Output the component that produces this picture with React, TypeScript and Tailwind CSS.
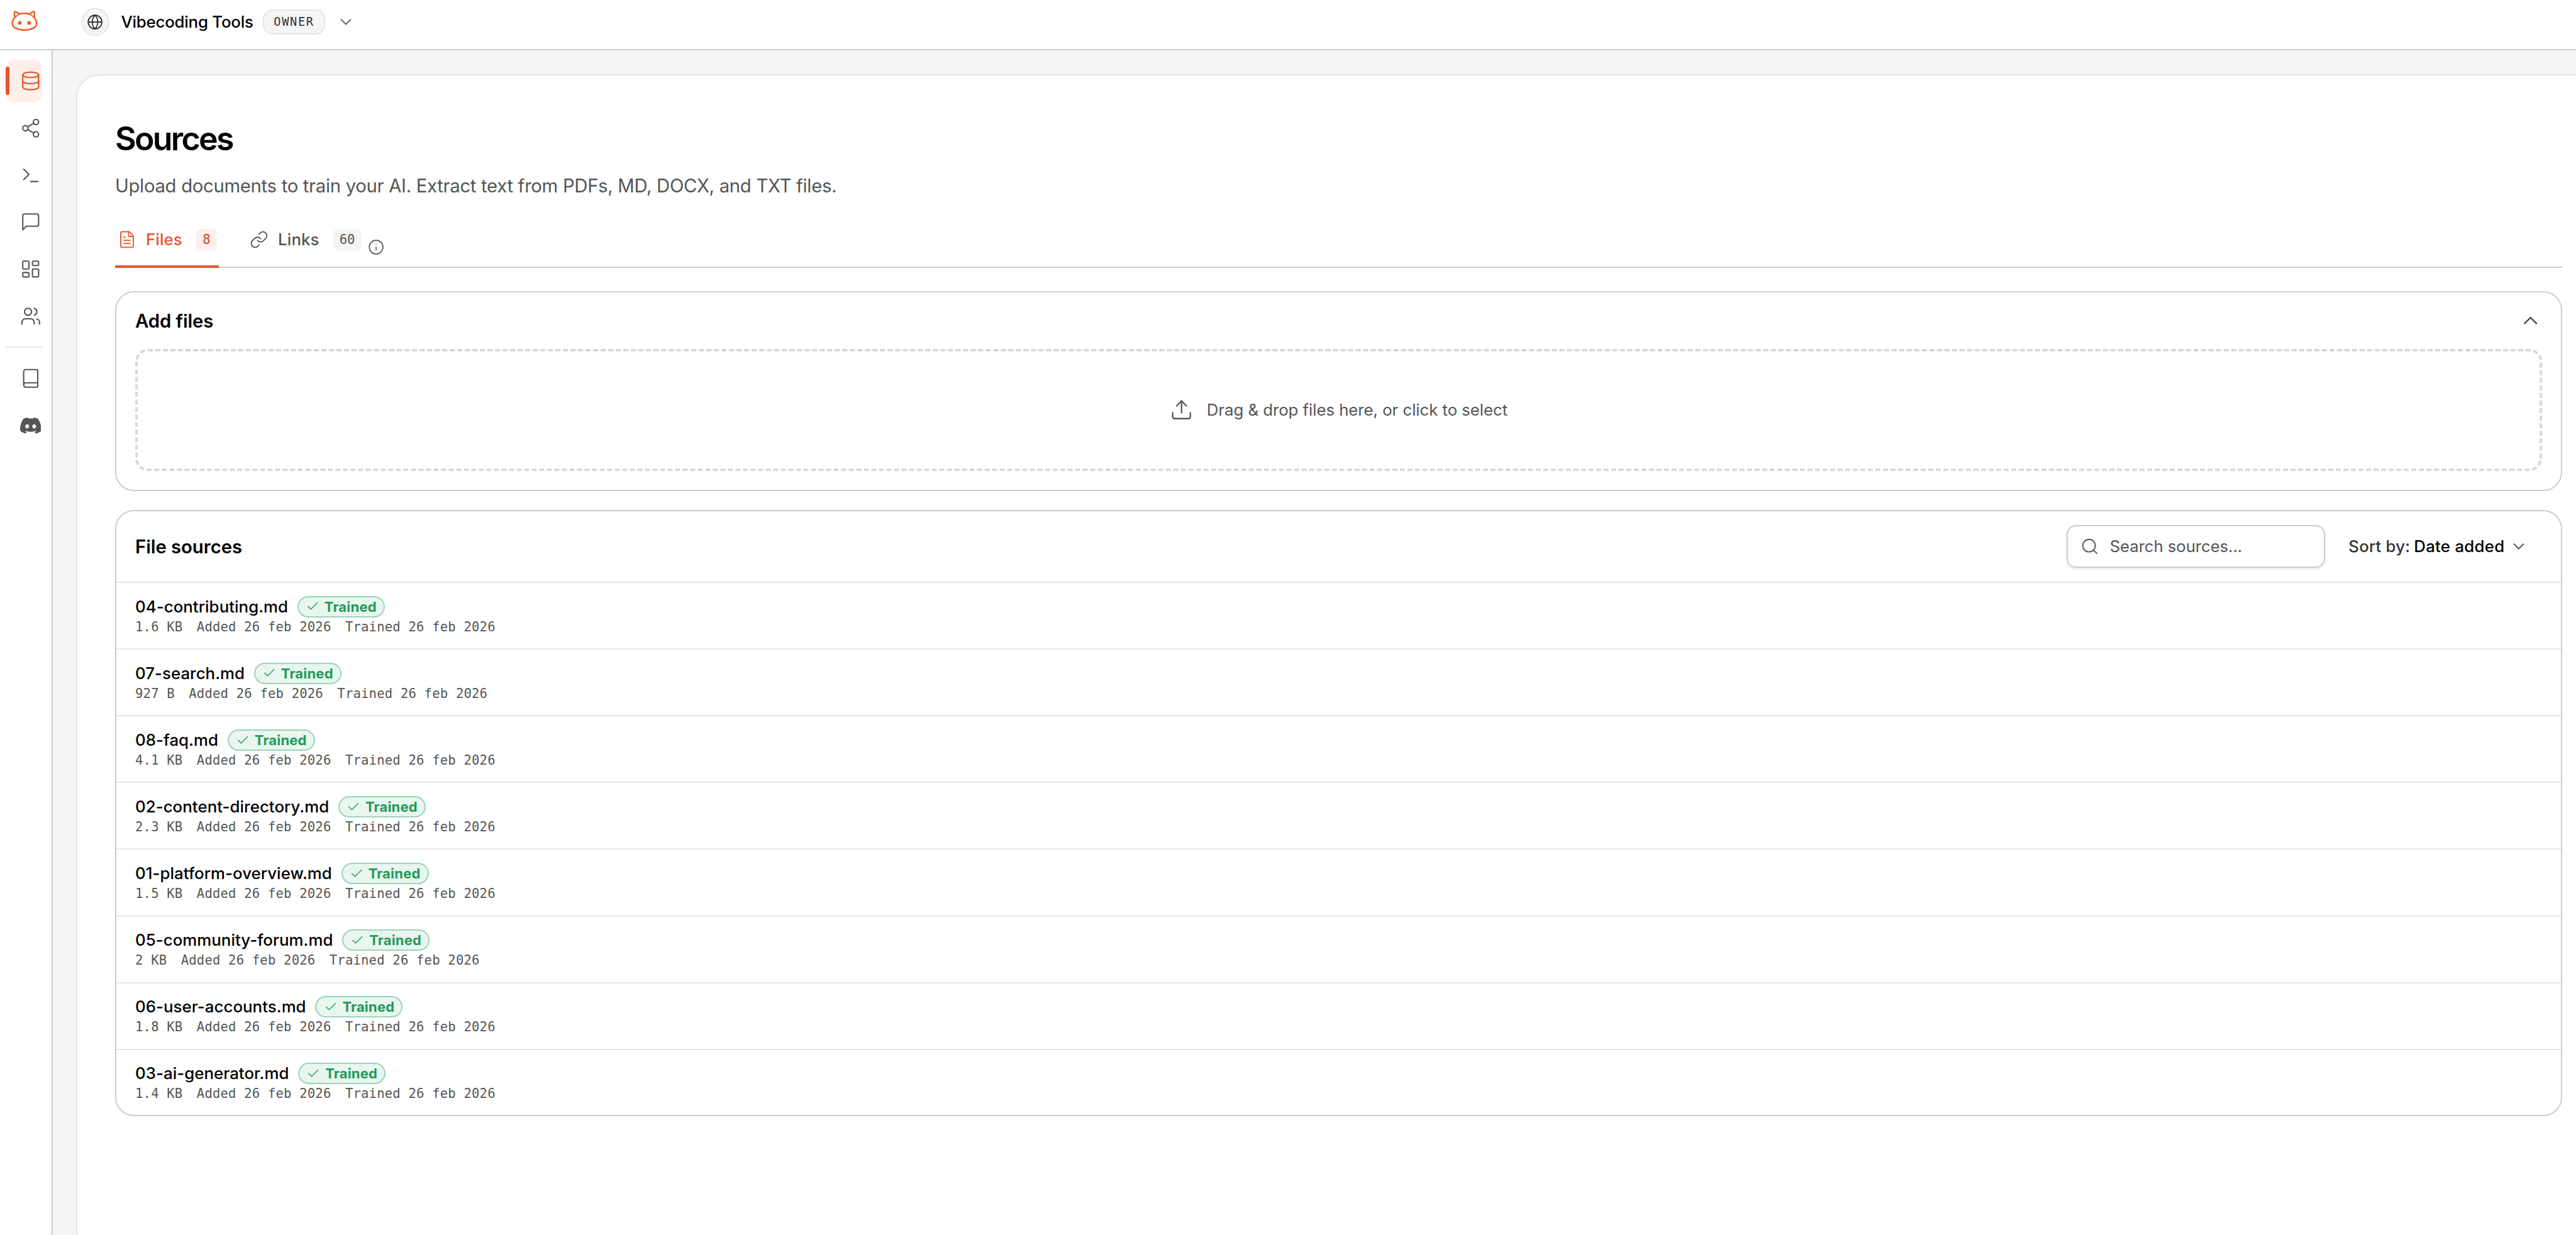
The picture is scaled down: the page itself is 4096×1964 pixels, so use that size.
import type { ReactNode } from "react";
import {
  Book,
  Check,
  ChevronDown,
  ChevronUp,
  Database,
  FileText,
  Globe,
  Info,
  LayoutDashboard,
  Link,
  Search,
  Share2,
  Terminal,
  Upload,
  Users,
} from "lucide-react";
import { SiDiscord } from "react-icons/si";

const files = [
  { name: "04-contributing.md", size: "1.6 KB" },
  { name: "07-search.md", size: "927 B" },
  { name: "08-faq.md", size: "4.1 KB" },
  { name: "02-content-directory.md", size: "2.3 KB" },
  { name: "01-platform-overview.md", size: "1.5 KB" },
  { name: "05-community-forum.md", size: "2 KB" },
  { name: "06-user-accounts.md", size: "1.8 KB" },
  { name: "03-ai-generator.md", size: "1.4 KB" },
];

function Logo() {
  return (
    <svg viewBox="0 0 192 180" className="h-[56px] w-[59.8px]" fill="none" stroke="#ee5a24" strokeWidth="8" strokeLinecap="round" strokeLinejoin="round">
      <path d="M47 66 C44 56 44 46 46 39 C47 36 50 36 53 38 L70 49 C86 45 106 45 122 49 L139 38 C142 36 145 36 146 39 C148 46 148 56 145 66 C152 74 158 87 158 99 C158 119 128 131 96 131 C64 131 34 119 34 99 C34 87 40 74 47 66 Z" />
      <path d="M49 65 C55 58 62 53 70 50 M143 65 C137 58 130 53 122 50" strokeWidth="6" />
      <circle cx="72" cy="95" r="9.5" fill="#ee5a24" stroke="none" />
      <circle cx="120" cy="95" r="9.5" fill="#ee5a24" stroke="none" />
    </svg>
  );
}

function ChatSquare() {
  return (
    <svg viewBox="0 0 24 24" className="size-[33.6px]" fill="none" stroke="currentColor" strokeWidth="1.5" strokeLinecap="round" strokeLinejoin="round">
      <path d="M21 15a2 2 0 0 1-2 2H7l-4 4V5a2 2 0 0 1 2-2h14a2 2 0 0 1 2 2z" />
    </svg>
  );
}

function NavItem({ children, active }: { children: ReactNode; active?: boolean }) {
  return (
    <div
      className={
        active
          ? "relative flex h-[67.3px] w-[58px] items-center justify-end rounded-[15px] bg-[#ffeeea] pr-[2px] text-[#e0522a]"
          : "relative flex h-[67.3px] w-[58px] items-center justify-end pr-[2px] text-[#555555]"
      }
    >
      {active && <span className="absolute left-0 top-[11.2px] h-[44.8px] w-[5.6px] rounded-full bg-[#e5552a]" />}
      {children}
    </div>
  );
}

function Row({ name, size, last }: { name: string; size: string; last: boolean }) {
  return (
    <div
      className={
        last
          ? "h-[103.7px] pl-[30px] pt-[20.8px]"
          : "h-[106.12px] border-b-2 border-[#e5e5e5] pl-[30px] pt-[20.8px]"
      }
    >
      <div className="flex h-[33.6px] items-center gap-[14.7px]">
        <span className="pt-[1px] text-[25.8px] font-[540] tracking-[0.06px] text-black">{name}</span>
        <span className="flex h-[34px] items-center gap-[7.5px] rounded-full border-2 border-[#9dd4b6] bg-[#e8f6ef] px-[11.2px] text-[#229a58]">
          <Check className="size-[22.4px]" strokeWidth={1.5} />
          <span className="text-[22px] font-bold leading-none tracking-[0.2px]">Trained</span>
        </span>
      </div>
      <div className="flex h-[31.2px] items-center gap-[22.4px] font-['DejaVu_Sans_Mono',monospace] text-[20.55px] tracking-[0.2px] text-[#555555]">
        <span>{size}</span>
        <span>Added 26 feb 2026</span>
        <span>Trained 26 feb 2026</span>
      </div>
    </div>
  );
}

export default function App() {
  return (
    <div className="flex h-[1964px] w-[4096px] flex-col overflow-hidden bg-white font-[Inter,sans-serif] text-black">
      <header className="flex h-[80px] shrink-0 border-b-2 border-[#cccccc]">
        <div className="flex h-[70px] items-center pl-[9.3px]">
          <Logo />
          <span className="ml-[59.8px] flex size-[44.8px] items-center justify-center rounded-full border-2 border-[#e5e5e5] bg-[#f5f5f5]">
            <Globe className="size-[26.2px] text-[#262626]" strokeWidth={1.5} />
          </span>
          <span className="ml-[18.7px] text-[25.8px] font-[540] tracking-[-0.2px]">Vibecoding Tools</span>
          <span className="ml-[15.5px] flex h-[39.2px] items-center rounded-[15px] border-2 border-[#e5e5e5] bg-[#f5f5f5] px-[15px] font-['DejaVu_Sans_Mono',monospace] text-[18.7px] tracking-[1.64px] text-[#333333]">
            OWNER
          </span>
          <ChevronDown className="ml-[18.7px] size-[29.9px] text-[#555555]" strokeWidth={1.5} />
        </div>
      </header>

      <div className="flex min-h-0 flex-1">
        <nav className="flex w-[84px] shrink-0 flex-col gap-[7.45px] border-r-2 border-[#cccccc] bg-white pl-[9.3px] pt-[15.3px]">
          <NavItem active><Database className="size-[33.6px]" strokeWidth={1.5} /></NavItem>
          <NavItem><Share2 className="size-[33.6px]" strokeWidth={1.5} /></NavItem>
          <NavItem><Terminal className="size-[33.6px]" strokeWidth={1.5} /></NavItem>
          <NavItem><ChatSquare /></NavItem>
          <NavItem><LayoutDashboard className="size-[33.6px]" strokeWidth={1.5} /></NavItem>
          <NavItem><Users className="size-[33.6px]" strokeWidth={1.5} /></NavItem>
          <div className="my-[7.5px] h-[2px] w-[58px] bg-[#e5e5e5]" />
          <NavItem><Book className="size-[33.6px]" strokeWidth={1.5} /></NavItem>
          <NavItem><SiDiscord className="size-[33.6px]" /></NavItem>
        </nav>

        <main className="flex min-w-0 flex-1 overflow-hidden bg-[#f5f5f5] pl-[37px] pt-[38px]">
          <section className="flex flex-1 flex-col rounded-tl-[37px] border-l-2 border-t-2 border-[#e5e5e5] bg-white pl-[60px] pt-[69.5px]">
            <h1 className="h-[60px] text-[51.8px] font-[640] leading-[60px] tracking-[-2.7px]">Sources</h1>
            <p className="mt-[26px] h-[40px] text-[29.3px] leading-[40px] tracking-[-0.31px] text-[#555555]">
              Upload documents to train your AI. Extract text from PDFs, MD, DOCX, and TXT files.
            </p>

            <div className="mt-[24.5px] flex h-[86px] w-[3891px] shrink-0 border-b-2 border-[#cccccc] text-[25.8px] font-[540]">
              <div className="-mb-[2px] flex w-[165.4px] items-center border-b-4 border-[#e5552a] px-[3.7px] text-[#e5552a]">
                <FileText className="size-[29.9px]" strokeWidth={1.5} />
                <span className="ml-[15.3px] pt-[1px] tracking-[0.15px]">Files</span>
                <span className="ml-auto flex h-[33.6px] items-center rounded-[7.5px] bg-[#ffeeea] px-[10.1px] font-['DejaVu_Sans_Mono',monospace] text-[20.55px] font-normal text-[#c74a24]">8</span>
              </div>
              <div className="ml-[44.8px] flex h-[82px] items-center px-[3.7px] text-[#555555]">
                <Link className="size-[29.9px]" strokeWidth={1.5} />
                <span className="ml-[15.3px] pt-[1px] tracking-[0.12px]">Links</span>
                <span className="ml-[22px] flex h-[33.6px] items-center rounded-[7.5px] bg-[#f5f5f5] px-[10.1px] font-['DejaVu_Sans_Mono',monospace] text-[20.55px] font-normal text-[#555555]">60</span>
              </div>
              <div className="ml-[7px] flex h-[82px] items-center pt-[24px]">
                <Info className="size-[26.2px] text-[#555555]" strokeWidth={1.5} />
              </div>
            </div>

            <div className="mt-[37.4px] h-[317.7px] w-[3891px] shrink-0 rounded-[30px] border-2 border-[#cccccc] px-[30px]">
              <div className="flex h-[89.6px] items-center justify-between">
                <h2 className="pt-[1px] text-[29.3px] font-semibold tracking-[-0.1px]">Add files</h2>
                <ChevronUp className="size-[37.4px] text-[#444444]" strokeWidth={1.5} />
              </div>
              <div className="flex h-[194.3px] items-center justify-center gap-[21.5px] rounded-[20px] border-4 border-dashed border-[#d9d9d9] text-[#555555]">
                <Upload className="size-[37.4px]" strokeWidth={1.5} />
                <span className="pt-[1px] text-[25.8px] tracking-[-0.05px]">Drag &amp; drop files here, or click to select</span>
              </div>
            </div>

            <div className="mt-[29.9px] h-[964.2px] w-[3891px] shrink-0 rounded-[30px] border-2 border-[#cccccc]">
              <div className="flex h-[114px] items-center justify-between border-b-2 border-[#e5e5e5] pl-[30px] pr-[52.3px]">
                <h2 className="pt-[1px] text-[29.3px] font-semibold tracking-[-0.05px]">File sources</h2>
                <div className="flex items-center">
                  <div className="flex h-[67.3px] w-[411px] items-center rounded-[15px] border-2 border-[#cccccc] pl-[20px] shadow-[0_2px_4px_rgba(0,0,0,0.1)]">
                    <Search className="size-[29.9px] text-[#555555]" strokeWidth={1.5} />
                    <span className="ml-[16.4px] pt-[1px] text-[25.8px] tracking-[-0.1px] text-[#555555]">Search sources...</span>
                  </div>
                  <span className="ml-[37px] text-[25.8px] font-[540] tracking-[0.18px] text-[#333333]">Sort by:</span>
                  <span className="ml-[6px] text-[25.8px] font-[540] tracking-[0.27px] text-black">Date added</span>
                  <ChevronDown className="ml-[7.4px] size-[29.9px] text-[#444444]" strokeWidth={1.5} />
                </div>
              </div>
              {files.map((f, i) => (
                <Row key={f.name} name={f.name} size={f.size} last={i === files.length - 1} />
              ))}
            </div>
          </section>
        </main>
      </div>
    </div>
  );
}
